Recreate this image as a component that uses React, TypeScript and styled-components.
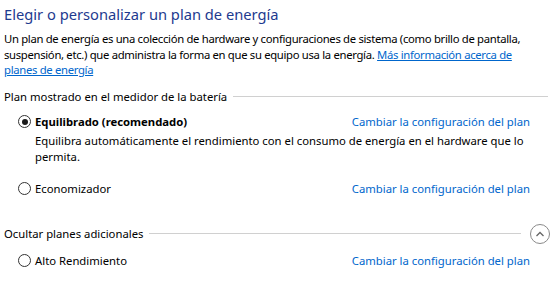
import React from "react";
import styled, { createGlobalStyle } from "styled-components";

const GlobalStyle = createGlobalStyle`
  html, body {
    margin: 0;
    padding: 0;
    background: #ffffff;
  }
  body {
    font-family: "Noto Sans", "Open Sans", sans-serif;
    font-size: 11.3px;
    color: #000000;
  }
`;

const Page = styled.div`
  width: 553px;
  height: 281px;
  box-sizing: border-box;
  padding: 4px 5px 0 4px;
  overflow: hidden;
`;

const Title = styled.h1`
  margin: 0;
  font-size: 14.7px;
  font-weight: 400;
  line-height: 20px;
  color: #1e3a8f;
`;

const Intro = styled.p`
  margin: 7px 0 0;
  line-height: 15.5px;
  letter-spacing: -0.32px;
  white-space: nowrap;
`;

const Link = styled.a<{ $underline?: boolean }>`
  color: #0066cc;
  text-decoration: ${(p) => (p.$underline ? "underline" : "none")};
  cursor: pointer;
`;

const GroupHeader = styled.div<{ $top: number }>`
  display: flex;
  align-items: center;
  gap: 6px;
  margin-top: ${(p) => p.$top}px;
  height: 18px;
`;

const GroupRule = styled.div`
  flex: 1;
  height: 1px;
  background: #d0d0d0;
`;

const Collapse = styled.button`
  width: 20px;
  height: 20px;
  padding: 0;
  border: 1px solid #8a8a8a;
  border-radius: 50%;
  background: #ffffff;
  display: flex;
  align-items: center;
  justify-content: center;
  margin-left: 3px;
  margin-right: -2px;
`;

const PlanRow = styled.div<{ $top: number }>`
  display: flex;
  align-items: center;
  justify-content: space-between;
  margin-top: ${(p) => p.$top}px;
  padding: 0 18px 0 14px;
  height: 18px;
`;

const PlanLabel = styled.label<{ $bold?: boolean }>`
  display: flex;
  align-items: center;
  gap: 4px;
  font-weight: ${(p) => (p.$bold ? 700 : 400)};
`;

const Radio = styled.span<{ $checked?: boolean }>`
  position: relative;
  width: 11px;
  height: 11px;
  border: 1px solid #333333;
  border-radius: 50%;
  box-sizing: content-box;

  &::after {
    content: "";
    display: ${(p) => (p.$checked ? "block" : "none")};
    position: absolute;
    left: 2.5px;
    top: 2.5px;
    width: 6px;
    height: 6px;
    border-radius: 50%;
    background: #1a1a1a;
  }
`;

const PlanDesc = styled.p`
  margin: 2px 0 0;
  padding: 0 20px 0 31px;
  line-height: 16.5px;
`;

type Plan = { name: string; checked?: boolean; bold?: boolean };

const PlanLine = ({ plan, top }: { plan: Plan; top: number }) => (
  <PlanRow $top={top}>
    <PlanLabel $bold={plan.bold}>
      <Radio $checked={plan.checked} />
      {plan.name}
    </PlanLabel>
    <Link>Cambiar la configuración del plan</Link>
  </PlanRow>
);

export default function App() {
  return (
    <>
      <GlobalStyle />
      <Page>
        <Title>Elegir o personalizar un plan de energía</Title>
        <Intro>
          Un plan de energía es una colección de hardware y configuraciones de sistema (como brillo de
          pantalla,
          <br />
          suspensión, etc.) que administra la forma en que su equipo usa la energía.{" "}
          <Link $underline>Más información acerca de</Link>
          <br />
          <Link $underline>planes de energía</Link>
        </Intro>

        <GroupHeader $top={10}>
          Plan mostrado en el medidor de la batería
          <GroupRule />
        </GroupHeader>

        <PlanLine plan={{ name: "Equilibrado (recomendado)", checked: true, bold: true }} top={7} />
        <PlanDesc>
          Equilibra automáticamente el rendimiento con el consumo de energía en el hardware que lo
          permita.
        </PlanDesc>

        <PlanLine plan={{ name: "Economizador" }} top={14} />

        <GroupHeader $top={27}>
          Ocultar planes adicionales
          <GroupRule />
          <Collapse aria-label="Ocultar">
            <svg width="12" height="12" viewBox="0 0 12 12">
              <path d="M2.5 8 L6 4.5 L9.5 8" fill="none" stroke="#666" strokeWidth="1.3" />
            </svg>
          </Collapse>
        </GroupHeader>

        <PlanLine plan={{ name: "Alto Rendimiento" }} top={9} />
      </Page>
    </>
  );
}
